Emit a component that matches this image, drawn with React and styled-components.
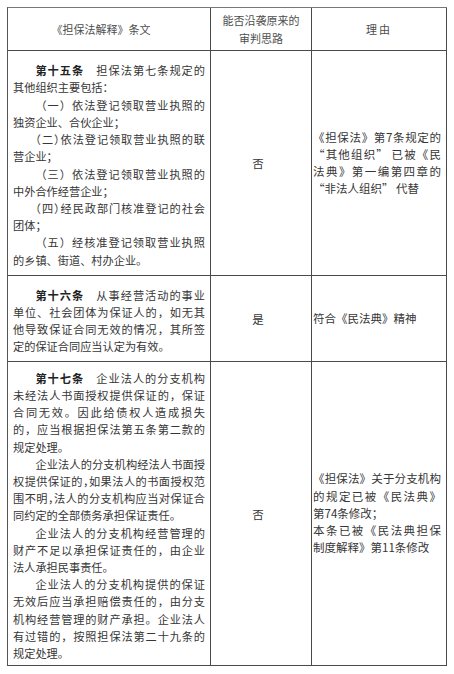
import React from 'react';
import styled, { createGlobalStyle } from 'styled-components';

const Global = createGlobalStyle`
  html, body { margin: 0; padding: 0; background: #fff; }
  body { font-family: "Noto Sans CJK SC", "Noto Sans", sans-serif; }
`;

const Page = styled.div`
  width: 454px;
  height: 674px;
  box-sizing: border-box;
  padding: 7px 0 0 7px;
  background: #fff;
`;

const Table = styled.div`
  display: grid;
  grid-template-columns: 203px 101px 135px;
  grid-template-rows: 43px 225px 86px 304px;
  width: 440px;
  box-sizing: border-box;
  border-top: 1px solid #777;
  border-left: 1px solid #555;
`;

const BaseCell = styled.div`
  box-sizing: border-box;
  border-right: 1px solid #4a4a4a;
  border-bottom: 1px solid #4a4a4a;
  display: flex;
  flex-direction: column;
  justify-content: center;
  color: #363636;
`;

const HeadCell = styled(BaseCell)`
  align-items: center;
  text-align: center;
  font-size: 11px;
  line-height: 18px;
  color: #4e4e4e;
  letter-spacing: ${p => p.$spread || 0};
  padding: ${p => p.$pad || '0'};
`;

const ArticleCell = styled(BaseCell)`
  padding: 5px 5px 0 5px;
  font-size: 11.2px;
  line-height: 17.2px;
`;

const VerdictCell = styled(BaseCell)`
  align-items: center;
  padding: 0 6px 0 0;
  font-size: 11.5px;
`;

const ReasonCell = styled(BaseCell)`
  padding: 0 5px 0 1px;
  font-size: 11.5px;
  line-height: 17.2px;
`;

const Line = styled.div`
  white-space: nowrap;
  text-align: ${p => (p.$full ? 'justify' : 'left')};
  text-align-last: ${p => (p.$full ? 'justify' : 'left')};
  padding-left: ${p => (p.$indent ? '2em' : '0')};
  font-feature-settings: ${p => (p.$tight ? '"halt"' : 'normal')};
`;

const Num = styled.span`
  font-weight: 700;
  color: #222;
`;

export default function App() {
  return (
    <>
      <Global />
      <Page>
        <Table lang="zh-CN">
          <HeadCell $pad="0 16px 0 0">《担保法解释》条文</HeadCell>
          <HeadCell>
            <div>能否沿袭原来的</div>
            <div>审判思路</div>
          </HeadCell>
          <HeadCell $spread="2px">理由</HeadCell>

          <ArticleCell>
            <Line $full $indent><Num>第十五条</Num>　担保法第七条规定的</Line>
            <Line>其他组织主要包括：</Line>
            <Line $full $indent>（一）依法登记领取营业执照的</Line>
            <Line>独资企业、合伙企业；</Line>
            <Line $full $indent $tight>（二）依法登记领取营业执照的联</Line>
            <Line>营企业；</Line>
            <Line $full $indent>（三）依法登记领取营业执照的</Line>
            <Line>中外合作经营企业；</Line>
            <Line $full $indent $tight>（四）经民政部门核准登记的社会</Line>
            <Line>团体；</Line>
            <Line $full $indent>（五）经核准登记领取营业执照</Line>
            <Line>的乡镇、街道、村办企业。</Line>
          </ArticleCell>
          <VerdictCell>否</VerdictCell>
          <ReasonCell>
            <Line $full>《担保法》第7条规定的</Line>
            <Line $full>“其他组织” 已被《民</Line>
            <Line $full>法典》第一编第四章的</Line>
            <Line>“非法人组织” 代替</Line>
          </ReasonCell>

          <ArticleCell>
            <Line $full $indent><Num>第十六条</Num>　从事经营活动的事业</Line>
            <Line $full>单位、社会团体为保证人的，如无其</Line>
            <Line $full>他导致保证合同无效的情况，其所签</Line>
            <Line>定的保证合同应当认定为有效。</Line>
          </ArticleCell>
          <VerdictCell>是</VerdictCell>
          <ReasonCell>
            <Line>符合《民法典》精神</Line>
          </ReasonCell>

          <ArticleCell>
            <Line $full $indent><Num>第十七条</Num>　企业法人的分支机构</Line>
            <Line $full>未经法人书面授权提供保证的，保证</Line>
            <Line $full>合同无效。因此给债权人造成损失</Line>
            <Line $full>的，应当根据担保法第五条第二款的</Line>
            <Line>规定处理。</Line>
            <Line $full $indent>企业法人的分支机构经法人书面授</Line>
            <Line $full $tight>权提供保证的，如果法人的书面授权范</Line>
            <Line $full $tight>围不明，法人的分支机构应当对保证合</Line>
            <Line>同约定的全部债务承担保证责任。</Line>
            <Line $full $indent>企业法人的分支机构经营管理的</Line>
            <Line $full>财产不足以承担保证责任的，由企业</Line>
            <Line>法人承担民事责任。</Line>
            <Line $full $indent>企业法人的分支机构提供的保证</Line>
            <Line $full>无效后应当承担赔偿责任的，由分支</Line>
            <Line $full>机构经营管理的财产承担。企业法人</Line>
            <Line $full>有过错的，按照担保法第二十九条的</Line>
            <Line>规定处理。</Line>
          </ArticleCell>
          <VerdictCell>否</VerdictCell>
          <ReasonCell>
            <Line $full>《担保法》关于分支机构</Line>
            <Line $full>的规定已被《民法典》</Line>
            <Line>第74条修改；</Line>
            <Line $full>本条已被《民法典担保</Line>
            <Line>制度解释》第11条修改</Line>
          </ReasonCell>
        </Table>
      </Page>
    </>
  );
}
